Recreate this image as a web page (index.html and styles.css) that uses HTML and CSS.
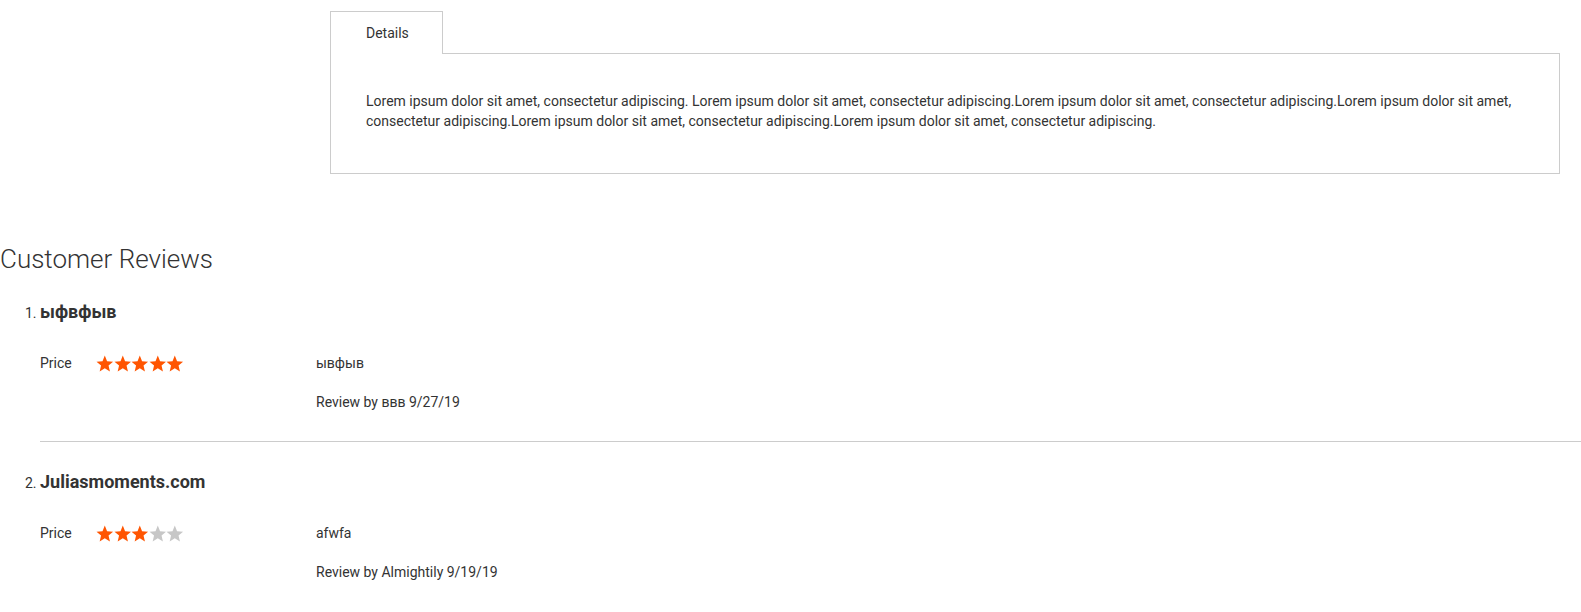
FILE: index.html
```html
<!DOCTYPE html>
<html lang="en">
  <head>
    <meta charset="UTF-8" />
    <meta name="viewport" content="width=device-width, initial-scale=1.0" />
    <title>Product</title>
    <link rel="stylesheet" href="styles.css">
  </head>
  <body>
    <div class="product-info">
      <div class="tabs-header">
        <div class="tab active">Details</div>
        <div class="tab-fill"></div>
      </div>
      <div class="tab-content">
        <p>Lorem ipsum dolor sit amet, consectetur adipiscing. Lorem ipsum dolor sit amet, consectetur adipiscing.Lorem ipsum dolor sit amet, consectetur adipiscing.Lorem ipsum dolor sit amet, consectetur adipiscing.Lorem ipsum dolor sit amet, consectetur adipiscing.Lorem ipsum dolor sit amet, consectetur adipiscing.</p>
      </div>
    </div>

    <div class="reviews">
      <h2 class="block-title">Customer Reviews</h2>
      <ol class="review-items">
        <li class="review-item">
          <h3 class="review-title">ыфвфыв</h3>
          <div class="review-details">
            <div class="review-ratings">
              <span class="rating-label">Price</span>
              <span class="stars">
                <svg class="star on" viewBox="0 0 24 24"><path d="M12 .8l3.1 7.6 8.2.7-6.2 5.3 1.9 8-7-4.3-7 4.3 1.9-8-6.2-5.3 8.2-.7z"/></svg>
                <svg class="star on" viewBox="0 0 24 24"><path d="M12 .8l3.1 7.6 8.2.7-6.2 5.3 1.9 8-7-4.3-7 4.3 1.9-8-6.2-5.3 8.2-.7z"/></svg>
                <svg class="star on" viewBox="0 0 24 24"><path d="M12 .8l3.1 7.6 8.2.7-6.2 5.3 1.9 8-7-4.3-7 4.3 1.9-8-6.2-5.3 8.2-.7z"/></svg>
                <svg class="star on" viewBox="0 0 24 24"><path d="M12 .8l3.1 7.6 8.2.7-6.2 5.3 1.9 8-7-4.3-7 4.3 1.9-8-6.2-5.3 8.2-.7z"/></svg>
                <svg class="star on" viewBox="0 0 24 24"><path d="M12 .8l3.1 7.6 8.2.7-6.2 5.3 1.9 8-7-4.3-7 4.3 1.9-8-6.2-5.3 8.2-.7z"/></svg>
              </span>
            </div>
            <div class="review-content">
              <p>ывфыв</p>
              <p class="review-author">Review by ввв 9/27/19</p>
            </div>
          </div>
        </li>
        <li class="review-item">
          <h3 class="review-title">Juliasmoments.com</h3>
          <div class="review-details">
            <div class="review-ratings">
              <span class="rating-label">Price</span>
              <span class="stars">
                <svg class="star on" viewBox="0 0 24 24"><path d="M12 .8l3.1 7.6 8.2.7-6.2 5.3 1.9 8-7-4.3-7 4.3 1.9-8-6.2-5.3 8.2-.7z"/></svg>
                <svg class="star on" viewBox="0 0 24 24"><path d="M12 .8l3.1 7.6 8.2.7-6.2 5.3 1.9 8-7-4.3-7 4.3 1.9-8-6.2-5.3 8.2-.7z"/></svg>
                <svg class="star on" viewBox="0 0 24 24"><path d="M12 .8l3.1 7.6 8.2.7-6.2 5.3 1.9 8-7-4.3-7 4.3 1.9-8-6.2-5.3 8.2-.7z"/></svg>
                <svg class="star" viewBox="0 0 24 24"><path d="M12 .8l3.1 7.6 8.2.7-6.2 5.3 1.9 8-7-4.3-7 4.3 1.9-8-6.2-5.3 8.2-.7z"/></svg>
                <svg class="star" viewBox="0 0 24 24"><path d="M12 .8l3.1 7.6 8.2.7-6.2 5.3 1.9 8-7-4.3-7 4.3 1.9-8-6.2-5.3 8.2-.7z"/></svg>
              </span>
            </div>
            <div class="review-content">
              <p>afwfa</p>
              <p class="review-author">Review by Almightily 9/19/19</p>
            </div>
          </div>
        </li>
      </ol>
    </div>
  </body>
</html>
```

FILE: styles.css
```css
body {
  margin: 0;
  font-family: Roboto, "Liberation Sans", sans-serif;
  font-size: 14px;
  line-height: 20px;
  color: #333;
  background-color: #fff;
}
p {
  margin: 0;
}

/* details tab */
.product-info {
  margin: 0 21px 0 330px;
  padding-top: 11px;
}
.tabs-header {
  display: flex;
  height: 43px;
}
.tab {
  box-sizing: border-box;
  width: 113px;
  height: 43px;
  padding-left: 35px;
  border: 1px solid #ccc;
  border-bottom: none;
  line-height: 42px;
}
.tab-fill {
  flex: 1;
  box-sizing: border-box;
  height: 43px;
  border-bottom: 1px solid #ccc;
}
.tab-content {
  border: 1px solid #ccc;
  border-top: none;
  padding: 37px 35px 42px 35px;
}

/* reviews */
.block-title {
  margin: 71px 0 0 0;
  font-size: 26px;
  font-weight: 300;
  line-height: 29px;
}
.review-items {
  margin: 28px 0 0 0;
  padding-left: 40px;
}
.review-item {
  border-bottom: 1px solid #ccc;
  padding-bottom: 29px;
  margin-bottom: 30px;
}
.review-item:last-child {
  border-bottom: none;
  padding-bottom: 0;
  margin-bottom: 0;
}
.review-title {
  margin: 0;
  font-size: 18px;
  font-weight: 700;
  line-height: 20px;
}
.review-details {
  display: flex;
  margin-top: 31px;
}
.review-ratings {
  width: 276px;
  display: flex;
  align-items: center;
  height: 20px;
}
.rating-label {
  width: 56px;
}
.stars {
  display: flex;
  margin-top: 1px;
}
.star {
  width: 17.6px;
  height: 17.6px;
  fill: #c7c7c7;
}
.star.on {
  fill: #ff5501;
}
.review-author {
  margin-top: 19px;
}
```
